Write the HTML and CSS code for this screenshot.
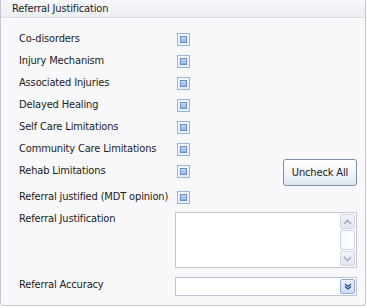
FILE: index.html
```html
<!DOCTYPE html>
<html lang="en">
<head>
  <meta charset="UTF-8" />
  <title>Referral Justification</title>
  <link rel="stylesheet" href="styles.css">
</head>
<body>
  <div class="panel">
    <div class="panel-header">Referral Justification</div>

    <div class="panel-body">
      <div class="row">
        <span class="label">Co-disorders</span>
        <span class="check"><span class="mark"></span></span>
      </div>
      <div class="row">
        <span class="label">Injury Mechanism</span>
        <span class="check"><span class="mark"></span></span>
      </div>
      <div class="row">
        <span class="label">Associated Injuries</span>
        <span class="check"><span class="mark"></span></span>
      </div>
      <div class="row">
        <span class="label">Delayed Healing</span>
        <span class="check"><span class="mark"></span></span>
      </div>
      <div class="row">
        <span class="label">Self Care Limitations</span>
        <span class="check"><span class="mark"></span></span>
      </div>
      <div class="row">
        <span class="label">Community Care Limitations</span>
        <span class="check"><span class="mark"></span></span>
      </div>
      <div class="row">
        <span class="label">Rehab Limitations</span>
        <span class="check"><span class="mark"></span></span>
        <button class="btn">Uncheck All</button>
      </div>
      <div class="row">
        <span class="label">Referral justified (MDT opinion)</span>
        <span class="check"><span class="mark"></span></span>
      </div>
      <div class="row row-top">
        <span class="label">Referral Justification</span>
        <div class="memo">
          <textarea class="memo-text"></textarea>
          <div class="scrollbar">
            <div class="sb-btn">
              <svg width="9" height="6" viewBox="0 0 9 6"><path d="M1 5 L4.5 1.5 L8 5" fill="none" stroke="#a3adc0" stroke-width="1.6"/></svg>
            </div>
            <div class="sb-thumb"></div>
            <div class="sb-btn">
              <svg width="9" height="6" viewBox="0 0 9 6"><path d="M1 1 L4.5 4.5 L8 1" fill="none" stroke="#a3adc0" stroke-width="1.6"/></svg>
            </div>
          </div>
        </div>
      </div>
      <div class="row">
        <span class="label">Referral Accuracy</span>
        <div class="combo">
          <span class="combo-value"></span>
          <span class="combo-btn">
            <svg width="8" height="7" viewBox="0 0 8 7"><path d="M1 1 L4 3.5 L7 1 M1 3.5 L4 6 L7 3.5" fill="none" stroke="#2b4d87" stroke-width="1.3"/></svg>
          </span>
        </div>
      </div>
    </div>
  </div>
</body>
</html>
```

FILE: styles.css
```css
body {
  margin: 0;
  background: #ffffff;
  font-family: Tahoma, "DejaVu Sans Condensed", "Liberation Sans", sans-serif;
  font-size: 11px;
  letter-spacing: -0.15px;
  color: #1a1a1a;
}

.panel {
  width: 364px;
  height: 305px;
  background: #f8f8fb;
  border: 1px solid #c4c8d4;
  border-top: none;
  border-radius: 0 0 4px 4px;
}

.panel-header {
  height: 17px;
  line-height: 17px;
  padding-left: 11px;
  color: #1a1a1a;
  background: linear-gradient(#f6f7fa, #eceef3);
  border-bottom: 1px solid #d9dce4;
  box-shadow: 0 1px 0 #ffffff;
}

.panel-body {
  padding: 10px 8px 0 18px;
}

.row {
  display: flex;
  align-items: flex-start;
  min-height: 22px;
}

.label {
  width: 156px;
  line-height: 22px;
  flex-shrink: 0;
}

.check {
  position: relative;
  width: 11px;
  height: 11px;
  margin: 5px 0 0 2px;
  border: 1px solid #98b5de;
  background: linear-gradient(#f4f8fd, #e6eef9);
}

.mark {
  position: absolute;
  left: 2px;
  top: 2px;
  width: 5px;
  height: 5px;
  border: 1px solid #6790cc;
  background: linear-gradient(#c4d7f3, #94b3e2);
}

.btn {
  margin-left: auto;
  width: 74px;
  height: 27px;
  margin-top: -1px;
  font-family: inherit;
  font-size: 11px;
  letter-spacing: inherit;
  color: #1a1a1a;
  border: 1px solid #8090ac;
  border-radius: 3px;
  background: linear-gradient(#ffffff, #f1f4f9 50%, #dfe6f0);
  padding: 0;
}

.row-top {
  height: 66px;
}

.memo {
  display: flex;
  margin-top: 4px;
  width: 180px;
  height: 54px;
  border: 1px solid #c0c5d2;
  background: #ffffff;
}

.memo-text {
  flex: 1;
  border: none;
  resize: none;
  outline: none;
  padding: 0;
  margin: 0;
}

.scrollbar {
  display: flex;
  flex-direction: column;
  width: 15px;
  padding: 1px 1px 1px 0;
  gap: 1px;
}

.sb-btn {
  display: flex;
  justify-content: center;
  align-items: center;
  height: 13px;
  border: 1px solid #cfd5e2;
  border-radius: 2px;
  background: linear-gradient(#f2f4f9, #e1e6f0);
}

.sb-thumb {
  flex: 1;
  border: 1px solid #c9d4e8;
  border-radius: 2px;
  background: linear-gradient(90deg, #f4f7fd, #ffffff);
}

.combo {
  display: flex;
  margin-top: 3px;
  width: 181px;
  height: 17px;
  border: 1px solid #c0c5d2;
  background: #ffffff;
}

.combo-value {
  flex: 1;
}

.combo-btn {
  display: flex;
  justify-content: center;
  align-items: center;
  width: 13px;
  height: 13px;
  margin: 1px 1px 0 0;
  border: 1px solid #90acd4;
  border-radius: 2px;
  background: linear-gradient(#e9f1fc, #c9daf3);
}
```
